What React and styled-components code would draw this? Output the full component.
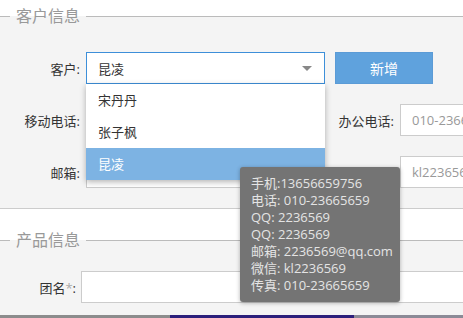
import React from 'react';
import styled, { createGlobalStyle } from 'styled-components';

const Global = createGlobalStyle`
  html, body { margin:0; padding:0; background:#fff; overflow:hidden; }
  body { font-family:"Open Sans","Noto Sans CJK SC",sans-serif; font-size:13px; color:#333; }
`;

const Page = styled.div`position:relative; width:463px; height:318px; padding-top:5px; box-sizing:border-box; overflow:hidden;`;
const Fieldset = styled.fieldset`
  margin:${p => p.$top || 0}px 0 0; padding:0; min-width:0;
  border:none; border-top:1px solid #bbb; border-bottom:${p => p.$noBottom ? 'none' : '1px solid #ccc'};
  background:#f4f4f4;
`;
const Legend = styled.legend`margin-left:10px; padding:0 6px; font-size:16px; line-height:22px; color:#999;`;
const Body = styled.div`display:flex; flex-direction:column; gap:20px; padding:${p => p.$pad};`;
const Row = styled.div`display:flex; align-items:center; height:32px;`;
const Label = styled.label`width:${p => p.$w}px; flex:none; box-sizing:border-box; padding-right:${p => p.$pr ?? 6}px; text-align:right; color:#333; font-size:13px; white-space:nowrap;`;
const Star = styled.span`color:#aaa;`;
const Input = styled.div`
  width:${p => p.$w || 239}px; height:32px; flex:none; box-sizing:border-box;
  border:1px solid #ccc; background:#fff; padding-left:11px;
  display:flex; align-items:center; color:#999; font-size:13px; white-space:nowrap; overflow:hidden;
`;
const SelectBox = styled.div`
  position:relative; width:239px; height:32px; flex:none; box-sizing:border-box;
  border:1px solid #3d8fd9; background:#fff; padding:0 12px 0 11px;
  display:flex; align-items:center; justify-content:space-between; color:#333;
`;
const Caret = styled.span`width:0; height:0; border-left:5px solid transparent; border-right:5px solid transparent; border-top:5px solid #888;`;
const Menu = styled.ul`
  position:absolute; top:calc(100% + 1px); left:-1px; width:239px; margin:0; padding:0; list-style:none;
  background:#fff; box-shadow:0 2px 6px rgba(0,0,0,0.3); z-index:2;
`;
const Item = styled.li`height:32px; line-height:32px; padding-left:12px; color:${p => p.$active ? '#fff' : '#333'}; background:${p => p.$active ? '#7db3e3' : '#fff'};`;
const Button = styled.button`
  margin-left:10px; width:98px; height:32px; flex:none; border:1px solid #5b9bd6; background:#5fa2dd;
  color:#fff; font-family:inherit; font-size:14px; padding:0;
`;
const Tip = styled.div`
  position:absolute; left:240px; top:167px; width:160px; height:135px; box-sizing:border-box;
  padding:8px 11px; background:#747474; color:#e4e4e4; font-size:13px; line-height:17px;
  border-radius:3px; box-shadow:0 1px 4px rgba(0,0,0,0.3); z-index:3; white-space:nowrap;
`;
const Strip = styled.div`display:flex; height:4px;`;
const Seg = styled.div`width:${p => p.$w ? p.$w + 'px' : 'auto'}; flex:${p => p.$w ? 'none' : 1}; background:${p => p.$c};`;

const tipLines = ['手机:13656659756', '电话: 010-23665659', 'QQ: 2236569', 'QQ: 2236569', '邮箱: 2236569@qq.com', '微信: kl2236569', '传真: 010-23665659'];

export default function App() {
  return (
    <Page>
      <Global />
      <Fieldset>
        <Legend>客户信息</Legend>
        <Body $pad="25px 0 20px">
          <Row>
            <Label $w={86}>客户:</Label>
            <SelectBox>
              <span>昆凌</span>
              <Caret />
              <Menu>
                <Item>宋丹丹</Item>
                <Item>张子枫</Item>
                <Item $active>昆凌</Item>
              </Menu>
            </SelectBox>
            <Button>新增</Button>
          </Row>
          <Row>
            <Label $w={86}>移动电话:</Label>
            <Input />
            <Label $w={75}>办公电话:</Label>
            <Input>010-23665659</Input>
          </Row>
          <Row>
            <Label $w={86}>邮箱:</Label>
            <Input />
            <Label $w={75}>微信:</Label>
            <Input>kl2236569</Input>
          </Row>
        </Body>
      </Fieldset>
      <Fieldset $top={20} $noBottom>
        <Legend>产品信息</Legend>
        <Body $pad="20px 0 12px">
          <Row>
            <Label $w={81} $pr={5}>团名<Star>*</Star>:</Label>
            <Input $w={420} />
          </Row>
        </Body>
      </Fieldset>
      <Strip>
        <Seg $w={170} $c="#8c8c8c" />
        <Seg $w={184} $c="#2c1f7b" />
        <Seg $c="#8b8a96" />
      </Strip>
      <Tip>
        {tipLines.map((l, i) => <div key={i}>{l}</div>)}
      </Tip>
    </Page>
  );
}
